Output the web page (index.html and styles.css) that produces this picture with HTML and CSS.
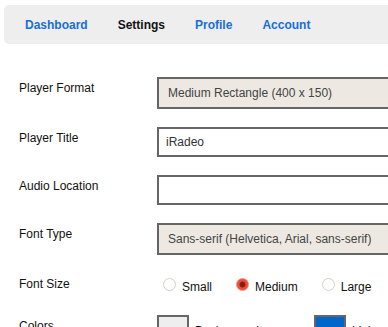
FILE: index.html
```html
<!DOCTYPE html>
<html lang="en">
<head>
    <meta charset="UTF-8">
    <meta name="viewport" content="width=device-width, initial-scale=1.0">
    <title>Player Settings</title>
    <link rel="stylesheet" href="styles.css">
</head>
<body>
    <div class="container">
        <nav class="tabs">
            <a href="#" class="tab-link">Dashboard</a>
            <a href="#" class="tab-link active">Settings</a>
            <a href="#" class="tab-link">Profile</a>
            <a href="#" class="tab-link">Account</a>
        </nav>

        <form class="settings-form">
            <div class="form-row">
                <label class="form-label" for="format">Player Format</label>
                <select id="format" class="field select-field">
                    <option>Medium Rectangle (400 x 150)</option>
                </select>
            </div>
            <div class="form-row">
                <label class="form-label" for="title">Player Title</label>
                <input type="text" id="title" class="field text-field" value="iRadeo">
            </div>
            <div class="form-row">
                <label class="form-label" for="audio">Audio Location</label>
                <input type="text" id="audio" class="field text-field">
            </div>
            <div class="form-row">
                <label class="form-label" for="font">Font Type</label>
                <select id="font" class="field select-field">
                    <option>Sans-serif (Helvetica, Arial, sans-serif)</option>
                </select>
            </div>
            <div class="form-row">
                <span class="form-label">Font Size</span>
                <div class="radio-group">
                    <label class="radio-option"><input type="radio" name="size" class="radio"> Small</label>
                    <label class="radio-option"><input type="radio" name="size" class="radio" checked> Medium</label>
                    <label class="radio-option"><input type="radio" name="size" class="radio"> Large</label>
                </div>
            </div>
            <div class="form-row">
                <span class="form-label">Colors</span>
                <div class="color-group">
                    <div class="color-item">
                        <span class="swatch swatch-bg"></span>
                        <span>Background</span>
                    </div>
                    <div class="color-item">
                        <span class="swatch swatch-link"></span>
                        <span>Link</span>
                    </div>
                </div>
            </div>
        </form>
    </div>
</body>
</html>
```

FILE: styles.css
```css
* {
    margin: 0;
    padding: 0;
    box-sizing: border-box;
    font-family: 'Liberation Sans', Arial, sans-serif;
}
html, body {
    overflow: hidden;
}
body {
    background-color: #fff;
    color: #111;
    font-size: 12px;
}
.container {
    width: 520px;
    margin: 5px 0 0 4px;
}
.tabs {
    display: flex;
    gap: 30px;
    background-color: #eeeeee;
    border-radius: 5px;
    padding: 13px 21px 12px;
    line-height: 14px;
}
.tab-link {
    font-weight: bold;
    color: #176fd8;
    text-decoration: none;
}
.tab-link.active {
    color: #111;
}
.settings-form {
    padding: 33px 0 0 15px;
}
.form-row {
    display: flex;
    align-items: flex-start;
    margin-bottom: 18px;
}
.form-label {
    width: 138px;
    flex-shrink: 0;
    padding-top: 4px;
    line-height: 14px;
}
.field {
    width: 320px;
    border: 2px solid #666;
    font-size: 12px;
    outline: none;
}
.select-field {
    appearance: none;
    height: 32px;
    padding: 0 9px;
    background-color: #ede9e2;
    color: #444;
    border-radius: 0;
}
.text-field {
    height: 30px;
    padding: 0 7px;
    background-color: #fff;
    color: #333;
}
.radio-group {
    display: flex;
    height: 24px;
    align-items: center;
    padding-top: 3px;
}
.radio-option {
    display: flex;
    align-items: center;
    gap: 6px;
    padding-left: 6px;
    margin-right: 18px;
}
.radio {
    appearance: none;
    width: 13px;
    height: 13px;
    border: 1px solid #d6d0c6;
    border-radius: 50%;
    background-color: #fff;
    margin-bottom: 5px;
}
.radio:checked {
    border-color: #f28a7c;
    background: radial-gradient(circle, #7a1d12 0, #8a2014 2.5px, #ee4f3c 3.5px);
}
.color-group {
    display: flex;
}
.color-item {
    display: flex;
    align-items: center;
    gap: 6px;
    width: 157px;
}
.swatch {
    width: 32px;
    height: 32px;
    border: 2px solid #666;
}
.swatch-bg {
    background-color: #eeeeee;
}
.swatch-link {
    background-color: #0066cc;
}
```
